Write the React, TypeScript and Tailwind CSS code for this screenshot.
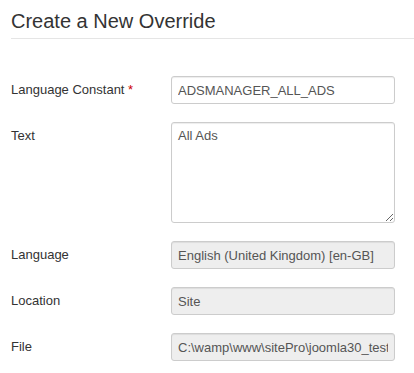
import React from "react";

const inputBase =
  "block w-[224px] h-[28px] px-[6px] py-[4px] text-[13px] leading-[18px] text-[#555] border border-[#ccc] rounded-[3px] shadow-[inset_0_1px_1px_rgba(0,0,0,0.075)] outline-none";

function Row({ label, star, children, mb = true }: { label: string; star?: boolean; children: React.ReactNode; mb?: boolean }) {
  return (
    <div className={"flex " + (mb ? "mb-[18px]" : "")}>
      <label className="w-[160px] shrink-0 pt-[5px] text-[13px] leading-[18px] text-[#333]">
        {label}
        {star && <span className="text-[#c00]"> *</span>}
      </label>
      {children}
    </div>
  );
}

export default function App() {
  return (
    <div
      className="w-[414px] h-[373px] bg-white overflow-hidden pl-[11px]"
      style={{ fontFamily: '"Liberation Sans", Arial, Helvetica, sans-serif' }}
    >
      <h2 className="pt-[9px] pb-[5px] text-[20px] leading-[24px] text-[#333] font-normal border-b border-[#e5e5e5]">
        Create a New Override
      </h2>
      <div className="pt-[37px]">
        <Row label="Language Constant" star>
          <input className={inputBase + " bg-white"} defaultValue="ADSMANAGER_ALL_ADS" />
        </Row>
        <Row label="Text">
          <textarea
            className="block w-[224px] h-[101px] px-[6px] py-[4px] text-[13px] leading-[18px] text-[#555] border border-[#ccc] rounded-[3px] shadow-[inset_0_1px_1px_rgba(0,0,0,0.075)] outline-none bg-white"
            defaultValue="All Ads"
          />
        </Row>
        <Row label="Language">
          <input className={inputBase + " bg-[#eee]"} readOnly value="English (United Kingdom) [en-GB]" />
        </Row>
        <Row label="Location">
          <input className={inputBase + " bg-[#eee]"} readOnly value="Site" />
        </Row>
        <Row label="File" mb={false}>
          <input
            className={inputBase + " bg-[#eee]"}
            readOnly
            value="C:\wamp\www\sitePro\joomla30_test\language\overrides\en-GB.override.ini"
          />
        </Row>
      </div>
    </div>
  );
}
